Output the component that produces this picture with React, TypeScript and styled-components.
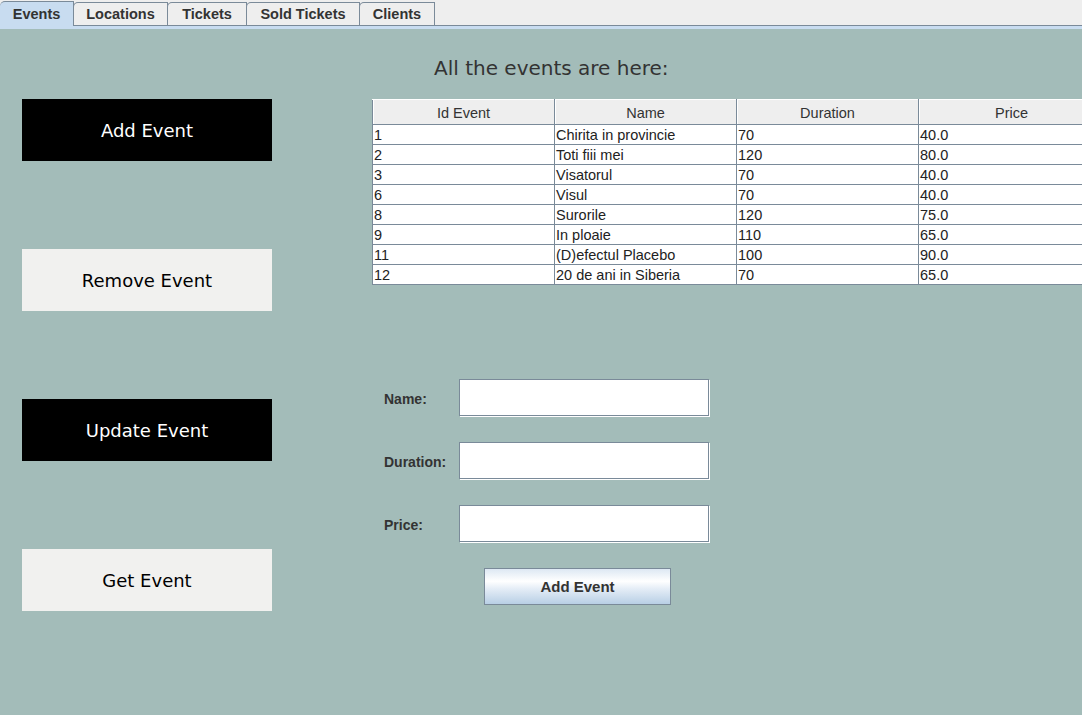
import React, { useState } from 'react';
import styled, { createGlobalStyle } from 'styled-components';

const GlobalStyle = createGlobalStyle`
  html, body {
    margin: 0;
    padding: 0;
    width: 1082px;
    height: 715px;
    overflow: hidden;
    background: #a3bcb9;
  }
  * { box-sizing: border-box; }
`;

const Frame = styled.div`
  width: 1082px;
  height: 715px;
  display: flex;
  flex-direction: column;
  background: #a3bcb9;
  font-family: 'Liberation Sans', Arial, sans-serif;
`;

const TabStrip = styled.div`
  height: 26px;
  display: flex;
  align-items: flex-end;
  background: #eeeeee;
  border-bottom: 1px solid #7a8a99;
`;

const Tab = styled.div<{ $active?: boolean; $width: number }>`
  width: ${p => p.$width}px;
  height: ${p => (p.$active ? 25 : 23)}px;
  margin-bottom: ${p => (p.$active ? -1 : 0)}px;
  display: flex;
  align-items: center;
  justify-content: center;
  background: ${p => (p.$active ? '#c8dcf0' : '#eeeeee')};
  border: 1px solid #7a8a99;
  border-bottom: none;
  border-left: ${p => (p.$active ? 'none' : '1px solid #7a8a99')};
  border-top-left-radius: 5px;
  font-weight: bold;
  font-size: 14.5px;
  color: #333333;
  cursor: default;
  position: relative;
  z-index: ${p => (p.$active ? 1 : 0)};
  & + & {
    margin-left: -1px;
  }
`;

const TabBand = styled.div`
  height: 3px;
  background: #c8dcf0;
`;

const Body = styled.div`
  flex: 1;
  display: flex;
  min-height: 0;
`;

const SideColumn = styled.div`
  width: 372px;
  flex-shrink: 0;
  padding: 70px 0 0 22px;
  display: flex;
  flex-direction: column;
  gap: 88px;
`;

const SideButton = styled.button<{ $dark?: boolean }>`
  width: 250px;
  height: 62px;
  border: none;
  background: ${p => (p.$dark ? '#000000' : '#f1f1ef')};
  color: ${p => (p.$dark ? '#ffffff' : '#000000')};
  font-family: 'DejaVu Sans', Verdana, sans-serif;
  font-size: 18px;
  cursor: pointer;
  padding: 0;
`;

const MainColumn = styled.div`
  flex: 1;
  min-width: 0;
  overflow: hidden;
  display: flex;
  flex-direction: column;
`;

const Title = styled.div`
  margin: 27px 0 0 62px;
  height: 43px;
  font-family: 'DejaVu Sans', Verdana, sans-serif;
  font-size: 20px;
  color: #333333;
`;

const Table = styled.table`
  width: 732px;
  border-collapse: collapse;
  table-layout: fixed;
  background: #ffffff;
  border: 1px solid #7a8a99;
  font-size: 14.5px;
  color: #222222;
`;

const Col = styled.col<{ $width: number }>`
  width: ${p => p.$width}px;
`;

const HeadCell = styled.th`
  height: 25px;
  padding: 1px 0 0;
  font-weight: normal;
  background: #eeeeee;
  border: 1px solid #7a8a99;
  border-top: 1px solid #ffffff;
  text-align: center;
  color: #333333;
  box-shadow: inset 1px 0 0 #ffffff;
`;

const Cell = styled.td`
  height: 20px;
  padding: 0 0 0 1px;
  border: 1px solid #7a8a99;
  white-space: nowrap;
  overflow: hidden;
  line-height: 18px;
`;

const Form = styled.div`
  margin: 94px 0 0 12px;
  display: grid;
  grid-template-columns: 75px 250px;
  grid-auto-rows: 37px;
  row-gap: 26px;
  align-items: center;
`;

const FieldLabel = styled.label`
  font-weight: bold;
  font-size: 14px;
  color: #333333;
  padding-top: 2px;
`;

const TextField = styled.input`
  width: 250px;
  height: 37px;
  border: 1px solid #7a8a99;
  box-shadow: 1px 1px 0 #ffffff;
  background: #ffffff;
  outline: none;
  padding: 0 4px;
  font-family: 'Liberation Sans', Arial, sans-serif;
  font-size: 14px;
`;

const SubmitRow = styled.div`
  grid-column: 1 / span 2;
  padding-left: 100px;
`;

const SubmitButton = styled.button`
  width: 187px;
  height: 37px;
  border: 1px solid #7a8a99;
  background: linear-gradient(to bottom, #dde8f3 0%, #ffffff 35%, #e6eef7 55%, #b8cfe5 100%);
  font-family: 'Liberation Sans', Arial, sans-serif;
  font-weight: bold;
  font-size: 15px;
  color: #333333;
  cursor: pointer;
`;

const tabs = [
  { label: 'Events', width: 74 },
  { label: 'Locations', width: 95 },
  { label: 'Tickets', width: 80 },
  { label: 'Sold Tickets', width: 114 },
  { label: 'Clients', width: 76 },
];

const columns = [
  { label: 'Id Event', width: 182 },
  { label: 'Name', width: 182 },
  { label: 'Duration', width: 182 },
  { label: 'Price', width: 186 },
];

const events = [
  { id: 1, name: 'Chirita in provincie', duration: 70, price: '40.0' },
  { id: 2, name: 'Toti fiii mei', duration: 120, price: '80.0' },
  { id: 3, name: 'Visatorul', duration: 70, price: '40.0' },
  { id: 6, name: 'Visul', duration: 70, price: '40.0' },
  { id: 8, name: 'Surorile', duration: 120, price: '75.0' },
  { id: 9, name: 'In ploaie', duration: 110, price: '65.0' },
  { id: 11, name: '(D)efectul Placebo', duration: 100, price: '90.0' },
  { id: 12, name: '20 de ani in Siberia', duration: 70, price: '65.0' },
];

const sideActions = [
  { label: 'Add Event', dark: true },
  { label: 'Remove Event', dark: false },
  { label: 'Update Event', dark: true },
  { label: 'Get Event', dark: false },
];

export default function App() {
  const [activeTab, setActiveTab] = useState('Events');
  const [form, setForm] = useState({ name: '', duration: '', price: '' });

  return (
    <Frame>
      <GlobalStyle />
      <TabStrip>
        {tabs.map(t => (
          <Tab
            key={t.label}
            $width={t.width}
            $active={t.label === activeTab}
            onClick={() => setActiveTab(t.label)}
          >
            {t.label}
          </Tab>
        ))}
      </TabStrip>
      <TabBand />
      <Body>
        <SideColumn>
          {sideActions.map(a => (
            <SideButton key={a.label} $dark={a.dark}>
              {a.label}
            </SideButton>
          ))}
        </SideColumn>
        <MainColumn>
          <Title>All the events are here:</Title>
          <Table>
            <colgroup>
              {columns.map(c => (
                <Col key={c.label} $width={c.width} />
              ))}
            </colgroup>
            <thead>
              <tr>
                {columns.map(c => (
                  <HeadCell key={c.label}>{c.label}</HeadCell>
                ))}
              </tr>
            </thead>
            <tbody>
              {events.map(e => (
                <tr key={e.id}>
                  <Cell>{e.id}</Cell>
                  <Cell>{e.name}</Cell>
                  <Cell>{e.duration}</Cell>
                  <Cell>{e.price}</Cell>
                </tr>
              ))}
            </tbody>
          </Table>
          <Form>
            <FieldLabel htmlFor="name">Name:</FieldLabel>
            <TextField
              id="name"
              value={form.name}
              onChange={ev => setForm({ ...form, name: ev.target.value })}
            />
            <FieldLabel htmlFor="duration">Duration:</FieldLabel>
            <TextField
              id="duration"
              value={form.duration}
              onChange={ev => setForm({ ...form, duration: ev.target.value })}
            />
            <FieldLabel htmlFor="price">Price:</FieldLabel>
            <TextField
              id="price"
              value={form.price}
              onChange={ev => setForm({ ...form, price: ev.target.value })}
            />
            <SubmitRow>
              <SubmitButton>Add Event</SubmitButton>
            </SubmitRow>
          </Form>
        </MainColumn>
      </Body>
    </Frame>
  );
}
